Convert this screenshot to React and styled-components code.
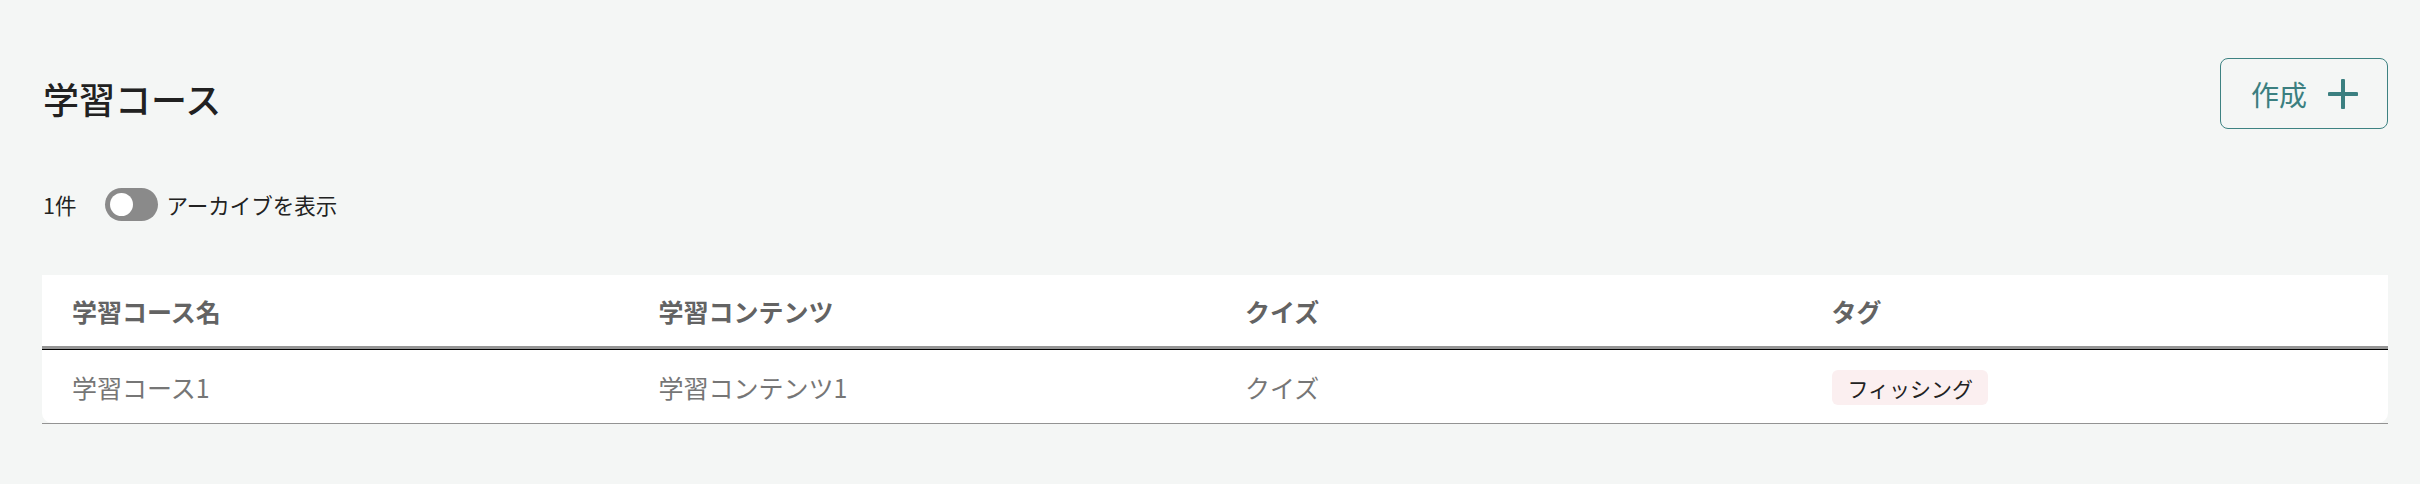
import React from "react";
import styled, { createGlobalStyle } from "styled-components";

const GlobalStyle = createGlobalStyle`
  html, body {
    margin: 0;
    padding: 0;
    background: #f4f6f5;
  }
  body {
    font-family: "Noto Sans CJK JP", "Noto Sans", sans-serif;
    color: #212121;
  }
  * { box-sizing: border-box; }
`;

const Page = styled.div`
  padding: 58px 32px 40px 42px;
`;

const HeaderBar = styled.div`
  display: flex;
  justify-content: space-between;
  align-items: flex-start;
`;

const Title = styled.h1`
  margin: 13px 0 0 1px;
  font-size: 36px;
  line-height: 54px;
  font-weight: 500;
  color: #212121;
`;

const CreateButton = styled.button`
  display: flex;
  align-items: center;
  gap: 21px;
  height: 71px;
  padding: 0 29px 0 30px;
  border: 1.5px solid #3d8282;
  border-radius: 8px;
  background: transparent;
  color: #3b7f80;
  font-family: inherit;
  font-size: 28px;
  font-weight: 400;
  cursor: pointer;
`;

const Toolbar = styled.div`
  display: flex;
  align-items: center;
  margin-top: 59px;
  height: 33px;
`;

const Count = styled.span`
  font-size: 21.5px;
  line-height: 33px;
  color: #222;
  margin-right: 29px;
  margin-left: 1px;
`;

const ToggleTrack = styled.span`
  position: relative;
  display: inline-block;
  width: 53px;
  height: 33px;
  border-radius: 17px;
  background: ${(p) => (p.$on ? "#3b7f80" : "#8a8a8a")};
  margin-right: 8px;
`;

const ToggleThumb = styled.span`
  position: absolute;
  top: 5px;
  left: ${(p) => (p.$on ? "25px" : "5px")};
  width: 23px;
  height: 23px;
  border-radius: 50%;
  background: #fff;
`;

const ToggleLabel = styled.span`
  font-size: 21.5px;
  line-height: 33px;
  color: #222;
`;

const Table = styled.div`
  margin-top: 54px;
  border-bottom: 1.5px solid #939393;
`;

const HeadRow = styled.div`
  display: grid;
  grid-template-columns: repeat(4, 1fr);
  align-items: center;
  height: 74px;
  background: #fff;
  border-bottom: 3px solid #959595;
`;

const BodyRow = styled.div`
  display: grid;
  grid-template-columns: repeat(4, 1fr);
  align-items: center;
  height: 74px;
  background: #fff;
  border-top: 1px solid #000;
  border-radius: 0 0 10px 10px;
`;

const HeadCell = styled.div`
  padding-left: 30px;
  font-size: 25px;
  font-weight: 700;
  color: #636363;
`;

const Cell = styled.div`
  padding-left: 30px;
  font-size: 25px;
  font-weight: 400;
  color: #767676;
`;

const Tag = styled.span`
  display: inline-flex;
  align-items: center;
  height: 35px;
  padding: 0 15px 0 16px;
  border-radius: 6px;
  background: #fbeff0;
  font-size: 21px;
  color: #222;
`;

const PlusIcon = () => (
  <svg width="30" height="30" viewBox="0 0 30 30" fill="none">
    <path d="M15 1.5V28.5M1.5 15H28.5" stroke="#3b7f80" strokeWidth="4" strokeLinecap="round" />
  </svg>
);

export default function App() {
  const rows = [
    { name: "学習コース1", content: "学習コンテンツ1", quiz: "クイズ", tags: ["フィッシング"] },
  ];
  return (
    <>
      <GlobalStyle />
      <Page>
        <HeaderBar>
          <Title>学習コース</Title>
          <CreateButton>
            作成
            <PlusIcon />
          </CreateButton>
        </HeaderBar>
        <Toolbar>
          <Count>1件</Count>
          <ToggleTrack $on={false}>
            <ToggleThumb $on={false} />
          </ToggleTrack>
          <ToggleLabel>アーカイブを表示</ToggleLabel>
        </Toolbar>
        <Table>
          <HeadRow>
            <HeadCell>学習コース名</HeadCell>
            <HeadCell>学習コンテンツ</HeadCell>
            <HeadCell>クイズ</HeadCell>
            <HeadCell>タグ</HeadCell>
          </HeadRow>
          {rows.map((r) => (
            <BodyRow key={r.name}>
              <Cell>{r.name}</Cell>
              <Cell>{r.content}</Cell>
              <Cell>{r.quiz}</Cell>
              <Cell>
                {r.tags.map((t) => (
                  <Tag key={t}>{t}</Tag>
                ))}
              </Cell>
            </BodyRow>
          ))}
        </Table>
      </Page>
    </>
  );
}
